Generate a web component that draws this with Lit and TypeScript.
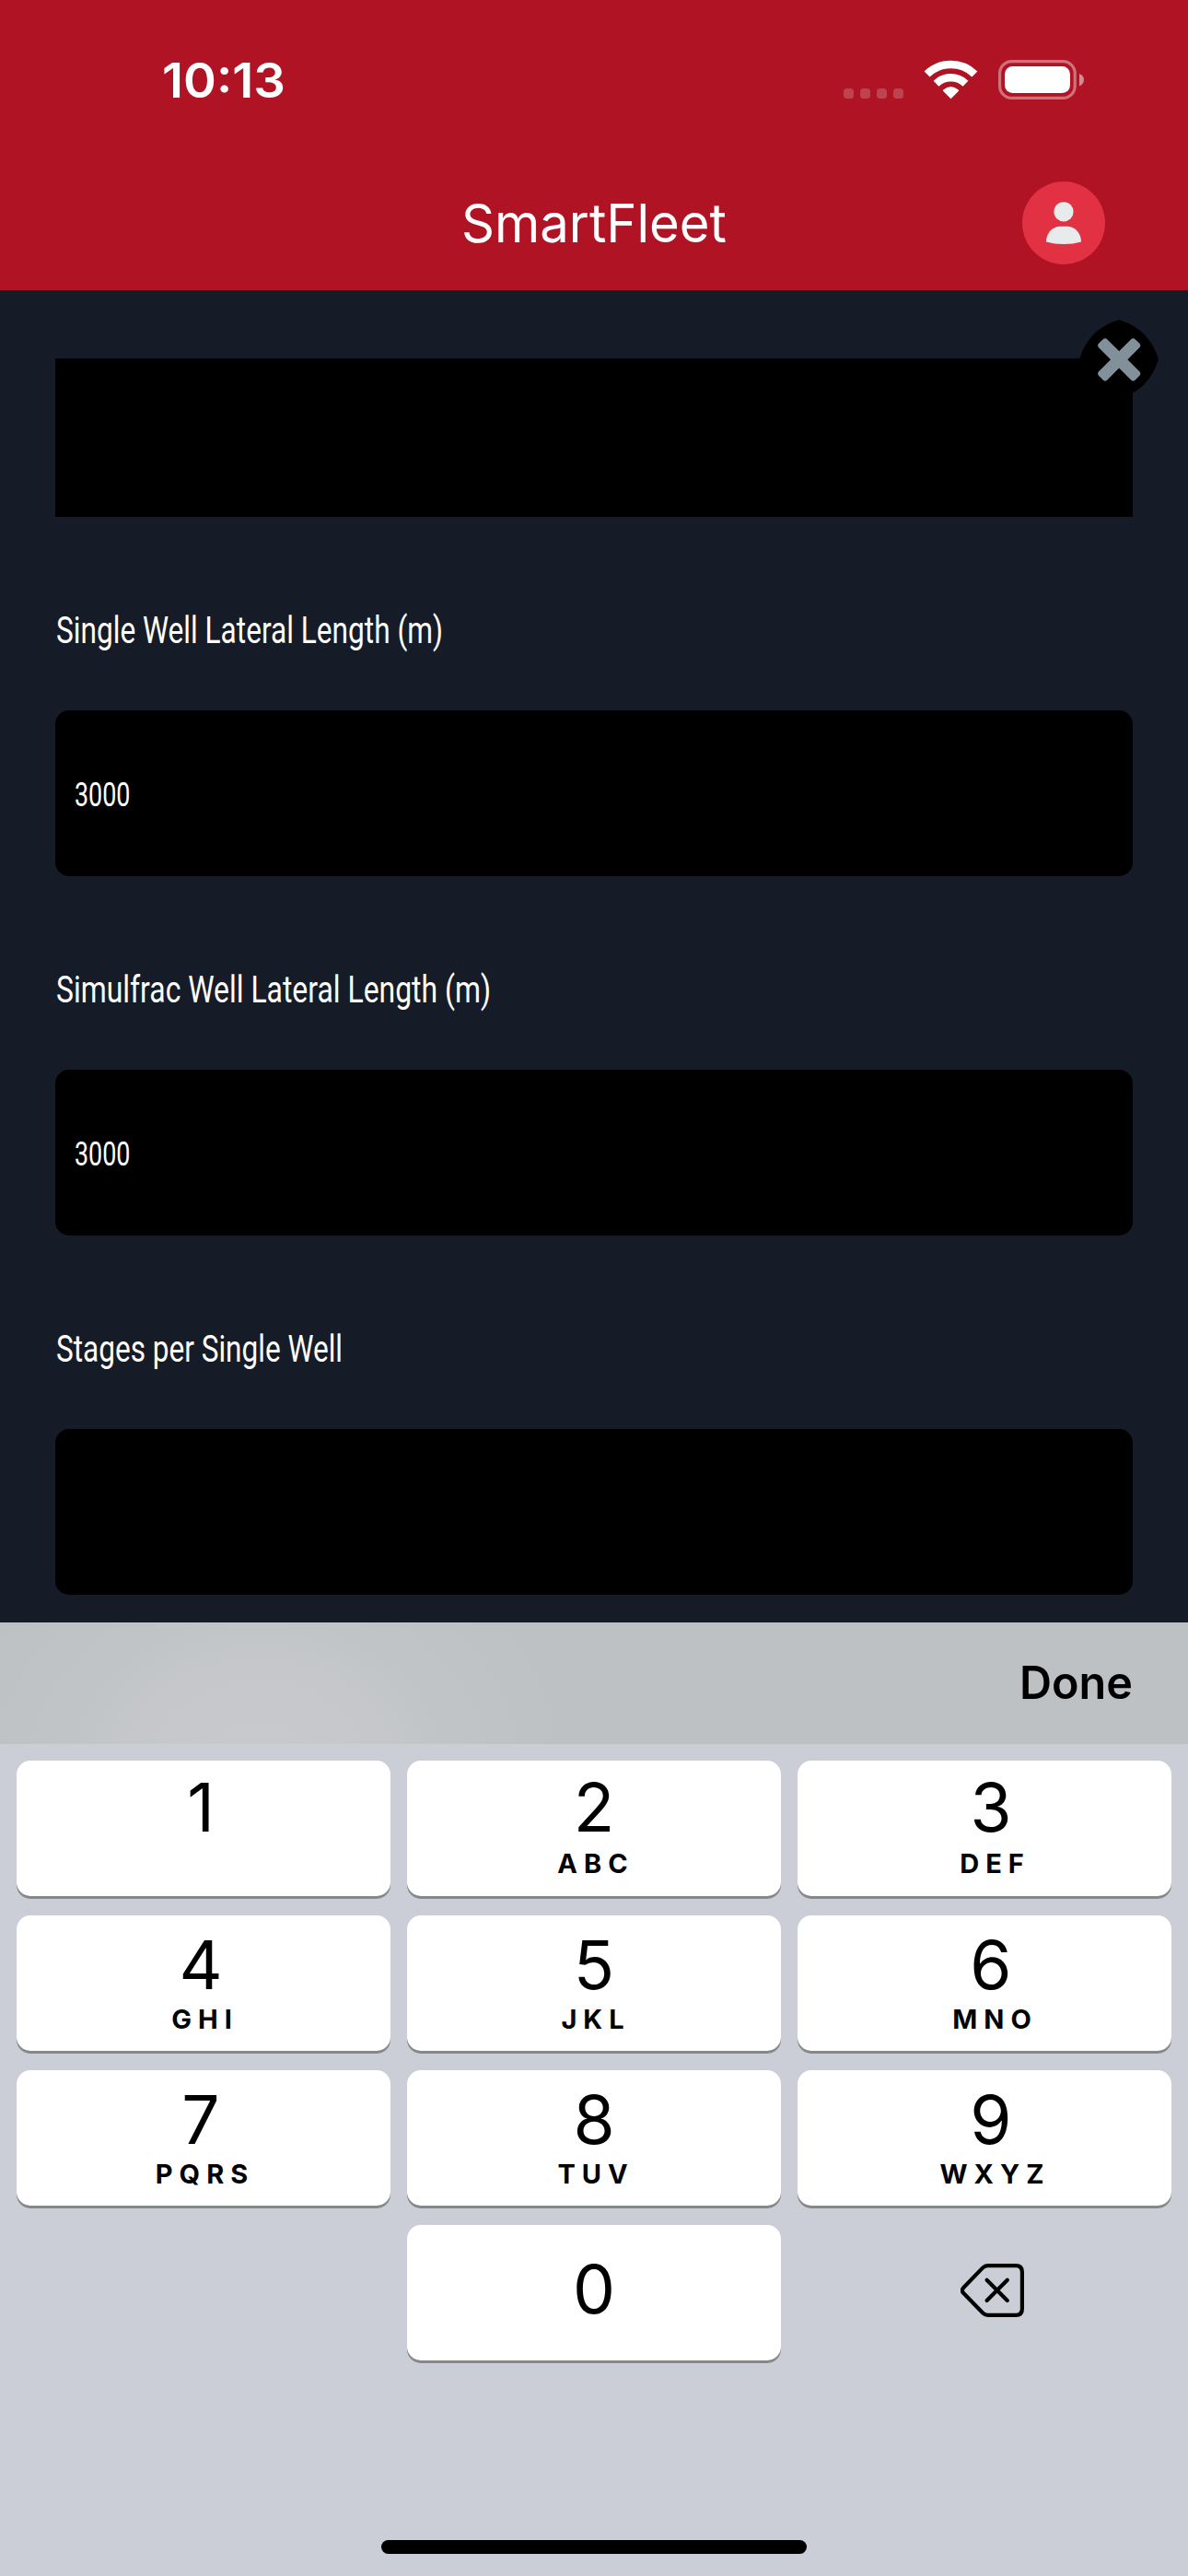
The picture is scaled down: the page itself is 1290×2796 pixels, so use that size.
import { LitElement, html, svg, css } from "lit";
import { customElement, property } from "lit/decorators.js";

/** A line of text stretched horizontally to a given width. */
@customElement("fit-text")
class FitText extends LitElement {
  @property({ type: String }) text = "";
  @property({ type: Number }) width = 100;

  static styles = css`
    :host { display: block; white-space: nowrap; }
    .line { display: inline-block; transform-origin: 0 50%; }
  `;

  async firstUpdated() {
    await document.fonts.ready;
    const el = this.renderRoot.querySelector(".line") as HTMLElement;
    this.style.width = `${this.width}px`;
    const natural = el.getBoundingClientRect().width;
    if (natural > 0) el.style.transform = `scaleX(${this.width / natural})`;
  }

  render() {
    return html`<span class="line">${this.text}</span>`;
  }
}

@customElement("status-bar")
class StatusBar extends LitElement {
  static styles = css`
    :host { display: flex; justify-content: space-between; height: 164px; padding: 0 113px 0 176px; box-sizing: border-box; }
    .time { margin-top: 57px; line-height: 62px; font-size: 52px; font-weight: 600; color: #fff; }
    .icons { display: block; margin-top: 60px; }
  `;
  render() {
    return html`
      <fit-text class="time" text="10:13" .width=${134}></fit-text>
      <svg class="icons" width="261" height="52" viewBox="916 60 261 52">
        <g fill="#fff" fill-opacity=".2">
          ${[916, 934, 952, 970].map((x) => svg`<rect x=${x} y="96" width="11" height="11" rx="3.5" />`)}
        </g>
        <g fill="none" stroke="#fff">
          <path d="M1006.6 80.5A37.2 37.2 0 0 1 1058.4 80.5" stroke-width="8.6" />
          <path d="M1016.5 90.8A23 23 0 0 1 1048.5 90.8" stroke-width="8.4" />
        </g>
        <path d="M1032.5 107.3L1024 98.8Q1023.6 98.2 1024.3 97.6Q1032.5 90.6 1040.7 97.6Q1041.4 98.2 1041 98.8Z" fill="#fff" />
        <rect x="1085.6" y="66.6" width="81.6" height="39.8" rx="13" fill="none" stroke="#fff" stroke-opacity=".4" stroke-width="3.2" />
        <rect x="1091" y="72" width="71" height="29" rx="8.5" fill="#fff" />
        <path d="M1172 80Q1177 82 1177 86.500T1172 93.500Z" fill="#fff" fill-opacity=".5" />
      </svg>
    `;
  }
}

@customElement("form-field")
class FormField extends LitElement {
  @property() label = "";
  @property() value = "";
  @property({ type: Number }) width = 100;

  static styles = css`
    :host { display: flex; flex-direction: column; color: #fff; font-family: Roboto, "Liberation Sans", sans-serif; }
    .label { height: 50px; line-height: 50px; font-size: 41px; margin: 98px 0 0 1px; }
    .box { display: flex; height: 180px; margin-top: 62px; border-radius: 15px; background: #000; }
    .value { margin: 67px 0 0 21px; height: 50px; line-height: 50px; font-size: 36px; }
  `;
  render() {
    return html`
      <fit-text class="label" text=${this.label} .width=${this.width}></fit-text>
      <div class="box">
        ${this.value ? html`<fit-text class="value" text=${this.value} .width=${60.5}></fit-text>` : ""}
      </div>
    `;
  }
}

interface Key { digit: string; letters: string; }
const ROWS: Key[][] = [
  [{ digit: "1", letters: "" }, { digit: "2", letters: "ABC" }, { digit: "3", letters: "DEF" }],
  [{ digit: "4", letters: "GHI" }, { digit: "5", letters: "JKL" }, { digit: "6", letters: "MNO" }],
  [{ digit: "7", letters: "PQRS" }, { digit: "8", letters: "TUV" }, { digit: "9", letters: "WXYZ" }],
];

@customElement("number-pad")
class NumberPad extends LitElement {
  static styles = css`
    :host { display: flex; flex-direction: column; align-items: center; box-sizing: border-box; height: 903px; padding: 18px 18px 24px; background: #cbced6; color: #000; }
    .keys { display: grid; width: 100%; grid-template-columns: repeat(3, 406px); grid-auto-rows: 147px; column-gap: 18px; row-gap: 21px; }
    .key { display: flex; flex-direction: column; align-items: center; box-sizing: border-box; padding-top: 9px; border-radius: 15px; background: #fff; box-shadow: 0 3px 0 #85878b; }
    .key.first { padding-top: 6px; }
    .key.zero { padding-top: 25px; }
    .key.c0 { padding-right: 6px; }
    .key.c2 { padding-left: 14px; }
    .digit { font-size: 73px; line-height: 90px; height: 90px; }
    .letters { font-size: 29px; line-height: 36px; height: 36px; font-weight: 700; letter-spacing: 7px; margin: -4px -9px 0 0; }
    .key.c1 .letters { margin-right: -4px; }
    .key.first .letters { margin-top: -2px; }
    .delete { display: flex; align-items: flex-start; justify-content: center; padding: 42px 0 0 17px; }
    .home { width: 462px; height: 15px; border-radius: 7.5px; background: #000; margin-top: auto; }
  `;
  render() {
    return html`
      <div class="keys">
        ${ROWS.map((row, r) => row.map((k, c) => html`
          <div class="key c${c} ${r === 0 ? "first" : ""}">
            <span class="digit">${k.digit}</span>
            <span class="letters">${k.letters}</span>
          </div>`))}
        <span></span>
        <div class="key zero"><span class="digit">0</span></div>
        <div class="delete">
          <svg width="70" height="59" viewBox="0 0 70 59" fill="none" stroke="#000" stroke-width="4.2" stroke-linecap="round" stroke-linejoin="round">
            <path d="M29.500 2.100H60Q66.900 2.100 66.900 9V49Q66.900 55.900 60 55.900H29.500Q26.500 55.900 24.200 53.600L3 31.800Q.8 29 3 26.200L24.200 4.400Q26.500 2.100 29.500 2.100Z" />
            <path d="M28.600 17.700L50.800 40M50.800 17.700L28.600 40" />
          </svg>
        </div>
      </div>
      <div class="home"></div>
    `;
  }
}

@customElement("app-root")
class AppRoot extends LitElement {
  static styles = css`
    :host { display: flex; flex-direction: column; width: 1290px; height: 2796px; overflow: hidden; background: #151c27; font-family: Inter, "Liberation Sans", sans-serif; }
    .header { height: 315px; flex: none; background: #b01323; }
    .nav { display: grid; grid-template-columns: 1fr auto 1fr; align-items: center; height: 151px; padding: 5px 90px 0; box-sizing: border-box; }
    .title { grid-column: 2; font-size: 58px; line-height: 70px; color: #fff; }
    .avatar { display: block; justify-self: end; }
    .form { position: relative; height: 1446px; flex: none; box-sizing: border-box; padding: 74px 60px 0; }
    .cut { height: 172px; background: #000; }
    .close { position: absolute; left: 1172px; top: 32px; display: block; }
    .fields { display: flex; flex-direction: column; }
    .accessory { display: flex; justify-content: flex-end; height: 132px; flex: none; box-sizing: border-box; padding: 36px 60px 0 0;
      background: radial-gradient(ellipse 340px 260px at 280px 150px, #c8c9cc 0%, #c5c7ca 40%, rgba(192, 196, 198, .6) 75%, rgba(189, 193, 195, 0) 100%), #bdc1c3; }
    .done { font-size: 49px; line-height: 60px; font-weight: 600; color: #000; }
  `;
  render() {
    return html`
      <div class="header">
        <status-bar></status-bar>
        <div class="nav">
          <fit-text class="title" text="SmartFleet" .width=${288}></fit-text>
          <svg class="avatar" width="90" height="90" viewBox="0 0 90 90">
            <circle cx="45" cy="45" r="45" fill="#e33144" />
            <circle cx="45" cy="32.800" r="10.600" fill="#e8ebec" />
            <path d="M26 65.500C26 56 33 48.700 41 48.700H49C57 48.700 64 56 64 65.500Q55 68 45 68T26 65.500Z" fill="#e8ebec" />
          </svg>
        </div>
      </div>
      <div class="form">
        <div class="cut"></div>
        <div class="fields">
          <form-field label="Single Well Lateral Length (m)" value="3000" .width=${420}></form-field>
          <form-field label="Simulfrac Well Lateral Length (m)" value="3000" .width=${472}></form-field>
          <form-field label="Stages per Single Well" .width=${311}></form-field>
        </div>
        <svg class="close" width="86" height="86" viewBox="0 0 86 86">
          <path d="M43 0Q76 10 86 43Q76 76 43 86Q10 76 0 43Q10 10 43 0Z" fill="#000" />
          <g fill="#82909a" transform="translate(43.2 43.300)">
            <rect x="-28" y="-6.500" width="56" height="13" rx="3.500" transform="rotate(45)" />
            <rect x="-28" y="-6.500" width="56" height="13" rx="3.500" transform="rotate(-45)" />
          </g>
        </svg>
      </div>
      <div class="accessory"><fit-text class="done" text="Done" .width=${123}></fit-text></div>
      <number-pad></number-pad>
    `;
  }
}
